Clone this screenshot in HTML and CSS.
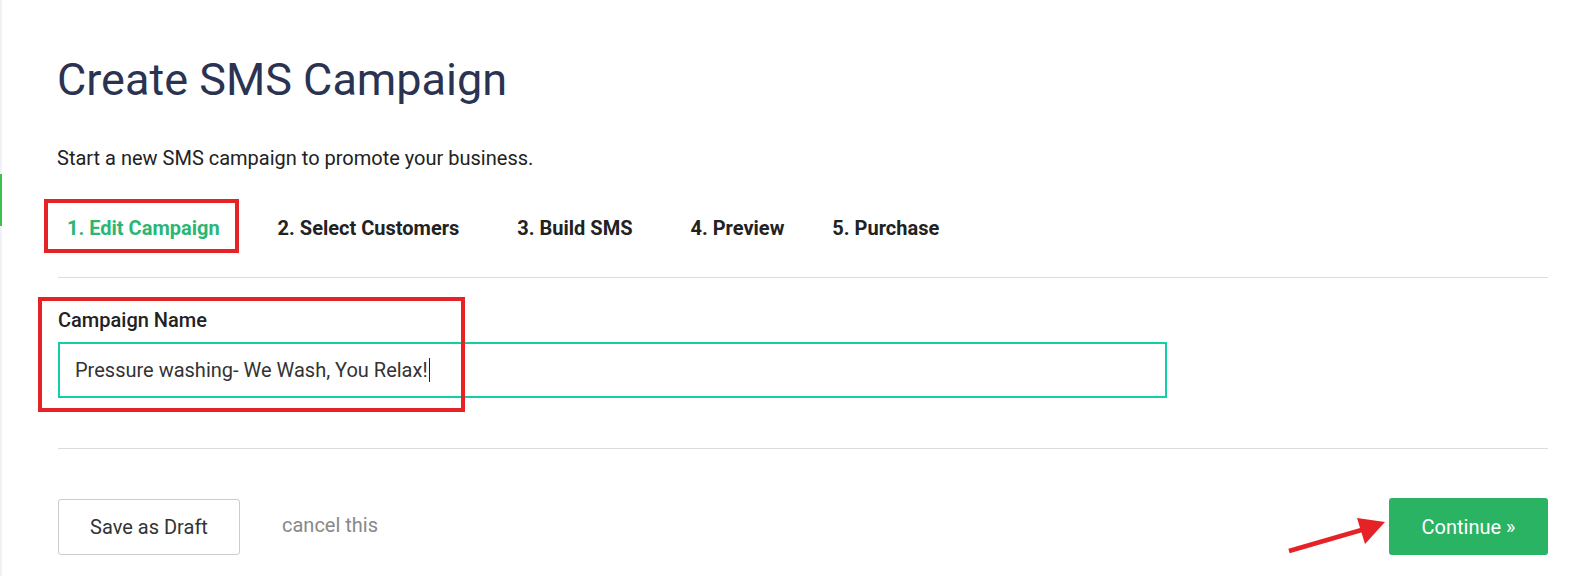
FILE: index.html
```html
<!DOCTYPE html>
<html lang="en">
  <head>
    <meta charset="UTF-8" />
    <meta name="viewport" content="width=device-width, initial-scale=1.0" />
    <title>Create SMS Campaign</title>
    <link rel="stylesheet" href="styles.css">
  </head>
  <body>
    <div id="page">
      <div class="side-mark"></div>

      <h1 class="page-title">Create SMS Campaign</h1>
      <p class="page-intro">Start a new SMS campaign to promote your business.</p>

      <ul class="steps">
        <li class="step active">1. Edit Campaign</li>
        <li class="step">2. Select Customers</li>
        <li class="step">3. Build SMS</li>
        <li class="step">4. Preview</li>
        <li class="step">5. Purchase</li>
      </ul>

      <div class="field">
        <label class="field-label" for="campaignName">Campaign Name</label>
        <div class="field-input">
          <span class="field-value">Pressure washing- We Wash, You Relax!</span><span class="caret"></span>
        </div>
      </div>

      <div class="actions">
        <div class="actions-left">
          <button class="draft-button">Save as Draft</button>
          <a class="cancel-link">cancel this</a>
        </div>
        <button class="continue-button">Continue &raquo;</button>
      </div>

      <!-- annotation overlays -->
      <div class="mark mark-step"></div>
      <div class="mark mark-field"></div>
      <svg class="mark-arrow" width="120" height="50" viewBox="0 0 120 50">
        <line x1="6" y1="44" x2="82" y2="22" stroke="#e52326" stroke-width="4.5" />
        <polygon points="102,15 74,11 82,37" fill="#e52326" />
      </svg>
    </div>
  </body>
</html>
```

FILE: styles.css
```css
* {
  margin: 0;
  padding: 0;
  box-sizing: border-box;
}

body {
  font-family: "Roboto", "Liberation Sans", sans-serif;
  background: #fff;
  color: #222;
}

#page {
  position: relative;
  height: 576px;
  padding: 52px 37px 0 56px;
  border-left: 2px solid #f0f2f5;
}

.side-mark {
  position: absolute;
  left: -2px;
  top: 174px;
  width: 2px;
  height: 52px;
  background: #3cc14e;
}

.page-title {
  font-size: 45px;
  line-height: 56px;
  font-weight: 400;
  color: #2a3352;
  margin-left: -1px;
}

.page-intro {
  margin-top: 38px;
  font-size: 20px;
  line-height: 24px;
  color: #222;
  margin-left: -1px;
}

.steps {
  list-style: none;
  display: flex;
  margin-top: 46px;
  padding: 0 0 0 9px;
  height: 62px;
  border-bottom: 1px solid #dcdcdc;
}

.step {
  font-size: 20px;
  line-height: 24px;
  font-weight: 700;
  color: #222;
  margin-right: 58px;
}

.step:nth-child(4) {
  margin-right: 48px;
}

.step.active {
  color: #2bb673;
}

.field {
  padding-top: 30px;
  padding-bottom: 50px;
  border-bottom: 1px solid #dcdcdc;
}

.field-label {
  display: block;
  font-size: 20px;
  line-height: 24px;
  font-weight: 500;
  color: #222;
}

.field-input {
  margin-top: 10px;
  width: 1109px;
  height: 56px;
  border: 2px solid #12cfa8;
  display: flex;
  align-items: center;
  padding: 0 15px;
}

.field-value {
  font-size: 20px;
  color: #333;
}

.caret {
  display: inline-block;
  width: 1px;
  height: 24px;
  background: #222;
  margin-left: 1px;
}

.actions {
  display: flex;
  justify-content: space-between;
  align-items: flex-start;
  margin-top: 49px;
}

.actions-left {
  display: flex;
  align-items: center;
}

.draft-button {
  font-family: inherit;
  width: 182px;
  height: 56px;
  border: 1px solid #ccc;
  border-radius: 3px;
  background: #fff;
  font-size: 20px;
  color: #333;
  margin-top: 1px;
}

.cancel-link {
  margin-left: 42px;
  margin-top: -4px;
  font-size: 20px;
  color: #888;
}

.continue-button {
  font-family: inherit;
  width: 159px;
  height: 57px;
  border: none;
  border-radius: 3px;
  background: #2ab363;
  color: #fff;
  font-size: 20px;
}

.mark {
  position: absolute;
  border: 4px solid #e52326;
}

.mark-step {
  left: 42px;
  top: 199px;
  width: 195px;
  height: 54px;
}

.mark-field {
  left: 36px;
  top: 297px;
  width: 427px;
  height: 115px;
}

.mark-arrow {
  position: absolute;
  left: 1281px;
  top: 507px;
}
```
